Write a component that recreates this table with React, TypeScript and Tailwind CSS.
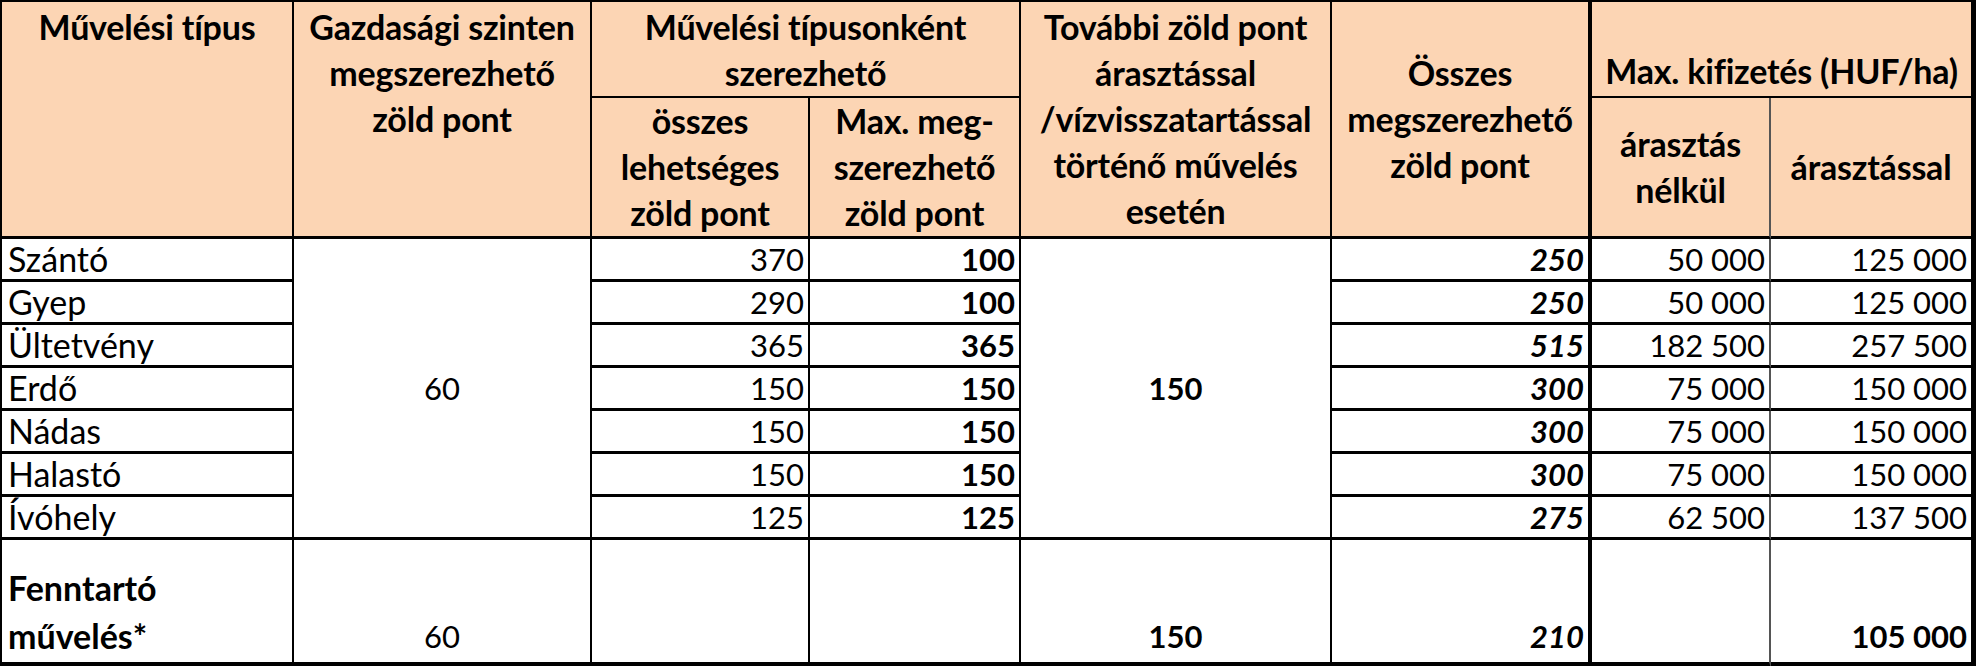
import React from "react";

const HC = "bg-[#FCD5B4] font-bold text-center text-black border-r-2 border-b-2 border-black leading-[46px] whitespace-nowrap p-0 text-[34px] tracking-[-0.2px]";

type Row = [string, string, string, string, string, string];
const rows: Row[] = [
  ["Szántó", "370", "100", "250", "50 000", "125 000"],
  ["Gyep", "290", "100", "250", "50 000", "125 000"],
  ["Ültetvény", "365", "365", "515", "182 500", "257 500"],
  ["Erdő", "150", "150", "300", "75 000", "150 000"],
  ["Nádas", "150", "150", "300", "75 000", "150 000"],
  ["Halastó", "150", "150", "300", "75 000", "150 000"],
  ["Ívóhely", "125", "125", "275", "62 500", "137 500"],
];

export default function App() {
  return (
    <div className="w-[1976px] h-[666px] bg-white overflow-hidden font-['Lato',sans-serif] text-[31px] text-black">
      <table className="table-fixed w-[1976px] border-separate border-spacing-0 border-t-2 border-l-2 border-black">
        <colgroup>
          <col className="w-[292px]" />
          <col className="w-[298px]" />
          <col className="w-[218px]" />
          <col className="w-[211px]" />
          <col className="w-[311px]" />
          <col className="w-[260px]" />
          <col className="w-[179px]" />
          <col className="w-[205px]" />
        </colgroup>
        <thead>
          <tr className="h-[95px]">
            <th rowSpan={2} className={`${HC} align-top pt-0.5 border-b-[3px]`}>Művelési típus</th>
            <th rowSpan={2} className={`${HC} align-top pt-0.5 border-b-[3px]`}>
              Gazdasági szinten<br />megszerezhető<br />zöld pont
            </th>
            <th colSpan={2} className={`${HC} align-top pt-0.5`}>
              Művelési típusonként<br />szerezhető
            </th>
            <th rowSpan={2} className={`${HC} align-top pt-0.5 border-b-[3px]`}>
              További zöld pont<br />árasztással<br />/vízvisszatartással<br />történő művelés<br />esetén
            </th>
            <th rowSpan={2} className={`${HC} align-middle border-r-4 border-b-[3px]`}>
              Összes<br />megszerezhető<br />zöld pont
            </th>
            <th colSpan={2} className={`${HC} align-bottom border-r-[5px] pb-0.5`}>Max. kifizetés (HUF/ha)</th>
          </tr>
          <tr className="h-[140px]">
            <th className={`${HC} align-middle border-b-[3px]`}>
              összes<br />lehetséges<br />zöld pont
            </th>
            <th className={`${HC} align-middle border-b-[3px]`}>
              Max. meg-<br />szerezhető<br />zöld pont
            </th>
            <th className={`${HC} align-middle border-b-[3px] border-r-[#555]`}>
              árasztás<br />nélkül
            </th>
            <th className={`${HC} align-middle border-b-[3px] border-r-[5px]`}>árasztással</th>
          </tr>
        </thead>
        <tbody>
          {rows.map((r, i) => (
            <tr key={r[0]} className="h-[43px]">
              <td className="border-r-2 border-b-[3px] border-black px-1.5 align-middle leading-[36px] whitespace-nowrap text-[34px]">{r[0]}</td>
              {i === 0 && (
                <td rowSpan={7} className="border-r-2 border-b-[3px] border-black text-center align-middle">60</td>
              )}
              <td className="border-r-2 border-b-[3px] border-black pr-1 text-right align-middle leading-[36px]">{r[1]}</td>
              <td className="border-r-2 border-b-[3px] border-black pr-1 text-right align-middle font-bold leading-[36px]">{r[2]}</td>
              {i === 0 && (
                <td rowSpan={7} className="border-r-2 border-b-[3px] border-black text-center align-middle font-bold">150</td>
              )}
              <td className="border-r-4 border-b-[3px] border-black pr-1 text-right align-middle font-bold italic leading-[36px]">{r[3]}</td>
              <td className="border-r-2 border-r-[#555] border-b-[3px] border-black pr-1 text-right align-middle leading-[36px]">{r[4]}</td>
              <td className="border-r-[5px] border-b-[3px] border-black pr-1 text-right align-middle leading-[36px]">{r[5]}</td>
            </tr>
          ))}
          <tr className="h-[128px]">
            <td className="border-r-2 border-b-[6px] border-black px-1.5 align-bottom font-bold leading-[48px] whitespace-nowrap pb-0.5 text-[34px]">
              Fenntartó<br />művelés*
            </td>
            <td className="border-r-2 border-b-[6px] border-black text-center align-bottom leading-[48px] pb-0.5">60</td>
            <td className="border-r-2 border-b-[6px] border-black"></td>
            <td className="border-r-2 border-b-[6px] border-black"></td>
            <td className="border-r-2 border-b-[6px] border-black text-center align-bottom font-bold leading-[48px] pb-0.5">150</td>
            <td className="border-r-4 border-b-[6px] border-black pr-1 text-right align-bottom font-bold italic leading-[48px] pb-0.5">210</td>
            <td className="border-r-2 border-r-[#555] border-b-[6px] border-black"></td>
            <td className="border-r-[5px] border-b-[6px] border-black pr-1 text-right align-bottom font-bold leading-[48px] pb-0.5">105 000</td>
          </tr>
        </tbody>
      </table>
    </div>
  );
}
